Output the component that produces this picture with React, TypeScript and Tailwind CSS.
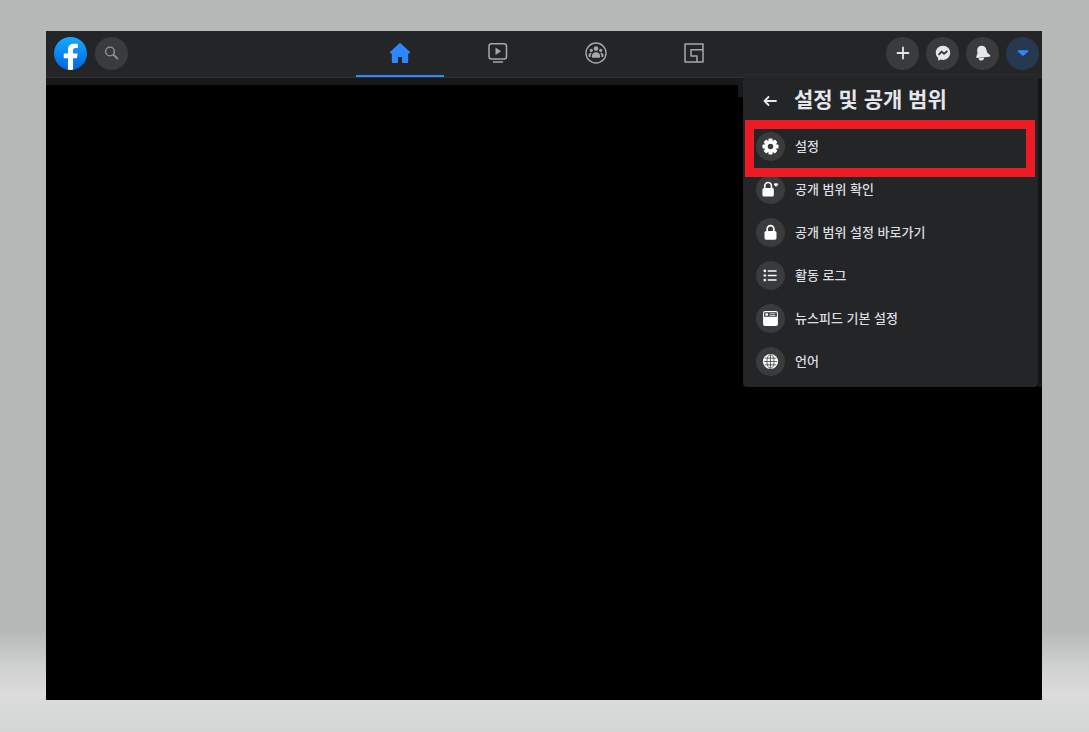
import { useState } from "react";
import type { ReactNode } from "react";

type IconProps = { className?: string };

function FacebookLogo() {
  return (
    <svg className="size-[33px]" viewBox="0 0 24 24">
      <defs>
        <linearGradient id="fb" x1="0" y1="0" x2="0" y2="1">
          <stop offset="0" stopColor="#17a9fd" />
          <stop offset="1" stopColor="#0165e1" />
        </linearGradient>
      </defs>
      <path fill="#fff" d="M6.5 4.5h11.5v11.5h-3.6v7.7q-2.3.5-4.8 0V16H6.5z" />
      <path
        fill="url(#fb)"
        d="M24 12.073c0-6.627-5.373-12-12-12s-12 5.373-12 12c0 5.99 4.388 10.954 10.125 11.854v-8.385H7.078v-3.47h3.047V9.43c0-3.007 1.792-4.669 4.533-4.669 1.312 0 2.686.235 2.686.235v2.953H15.83c-1.491 0-1.956.925-1.956 1.874v2.25h3.328l-.532 3.47h-2.796v8.385C19.612 23.027 24 18.062 24 12.073z"
      />
    </svg>
  );
}

function SearchIcon() {
  return (
    <svg className="size-4" viewBox="0 0 16 16" fill="none" stroke="currentColor">
      <circle cx="6" cy="6.5" r="4.4" strokeWidth="1.4" />
      <path d="M9.700 10l3.800 3.600" strokeWidth="1.9" strokeLinecap="round" />
    </svg>
  );
}

function HomeIcon() {
  return (
    <svg className="size-6" viewBox="0 0 24 24" fill="currentColor">
      <path d="M11.2 2.400a1.200 1.200 0 0 1 1.600 0l9 8.300c.7.7.4 1.700-.6 1.700h-1V21a1 1 0 0 1-1 1H15a1 1 0 0 1-1-1v-5h-4v5a1 1 0 0 1-1 1H4.800a1 1 0 0 1-1-1v-8.600h-1c-1 0-1.300-1-.6-1.700z" />
    </svg>
  );
}

function WatchIcon() {
  return (
    <svg className="size-6" viewBox="0 0 24 24" fill="none" stroke="currentColor" strokeWidth="1.5">
      <rect x="3" y="2.8" width="17.5" height="15.2" rx="2.5" />
      <path d="M9.500 6.500v7.500l5.500-3.750z" fill="currentColor" stroke="none" />
      <path d="M7.500 21h9" strokeLinecap="round" />
    </svg>
  );
}

function GroupsIcon() {
  return (
    <svg className="size-6" viewBox="0 0 24 24" fill="currentColor">
      <circle cx="12" cy="12" r="10" fill="none" stroke="currentColor" strokeWidth="1.4" />
      <circle cx="12" cy="7.6" r="2.3" />
      <circle cx="7.3" cy="9.3" r="1.6" />
      <circle cx="16.7" cy="9.3" r="1.6" />
      <path d="M7.800 15.800c0-3 1.600-4.600 4.200-4.600s4.200 1.600 4.200 4.600c0 .7-.4 1-1 1H8.800c-.6 0-1-.3-1-1z" />
      <path d="M7.300 11.700c-2 0-2.900 1.500-2.900 3.400 0 .5.300.8.700.8h1.400c0-1.700.4-3.100 1.500-4.100zM16.700 11.700c2 0 2.900 1.500 2.900 3.400 0 .5-.3.8-.7.8h-1.400c0-1.700-.4-3.100-1.500-4.100z" />
    </svg>
  );
}

function GamingIcon() {
  return (
    <svg className="size-6" viewBox="0 0 24 24" fill="none" stroke="currentColor" strokeWidth="1.5" strokeLinejoin="round">
      <path d="M3 3h18v18H3z" />
      <path d="M21 8.800H9V15h6v6" />
    </svg>
  );
}

function PlusIcon() {
  return (
    <svg className="size-5" viewBox="0 0 20 20" stroke="currentColor" strokeWidth="1.8" strokeLinecap="round">
      <path d="M10 4.500v11M4.500 10h11" />
    </svg>
  );
}

function MessengerIcon() {
  return (
    <svg className="size-5" viewBox="0 0 20 20">
      <path
        fill="currentColor"
        d="M10 2.800c-4.100 0-7.200 3-7.200 6.900 0 2.100.9 3.900 2.300 5.100v2.300c0 .4.400.6.700.4l1.700-.9c.8.200 1.600.3 2.500.3 4.100 0 7.200-3.100 7.200-7.100S14.100 2.800 10 2.800z"
      />
      <path fill="none" stroke="#3a3b3c" strokeWidth="1.9" strokeLinejoin="round" d="M5.600 11.900l3-3.300 2.500 2.200 3.300-2.700" />
    </svg>
  );
}

function BellIcon() {
  return (
    <svg className="size-5" viewBox="0 0 20 20" fill="currentColor">
      <path d="M8.200 2.700C5.300 3 3.900 5.300 4.200 8l.3 2.600-1.200 2.900c-.3.800.2 1.400 1 1.400l12.100-1.200c.9-.1 1.200-1.100.6-1.700l-2.700-2.300-.8-2.700C12.800 4 11.200 2.500 8.200 2.700z" />
      <path d="M5.500 15.300l5.600-.5c0 1.600-1.100 2.700-2.600 2.800-1.500.1-2.700-.8-3-2.300z" />
    </svg>
  );
}

function CaretIcon() {
  return (
    <svg className="size-5" viewBox="0 0 20 20" fill="currentColor">
      <path d="M5.400 7.300h9.200c.8 0 1.100.8.600 1.300l-4.400 4c-.5.500-1.100.5-1.600 0l-4.400-4c-.5-.5-.2-1.300.6-1.300z" />
    </svg>
  );
}

function BackIcon() {
  return (
    <svg className="size-4" viewBox="0 0 16 16" fill="none" stroke="currentColor" strokeWidth="1.8" strokeLinecap="round" strokeLinejoin="round">
      <path d="M14 9H2.500M6.500 5l-4 4 4 4" />
    </svg>
  );
}

function GearIcon({ className }: IconProps) {
  return (
    <svg className={className} viewBox="0 0 20 20">
      <g fill="currentColor">
        <circle cx="10" cy="10" r="6.4" />
        <rect x="7.8" y="1.6" width="4.4" height="16.8" rx="1" />
        <rect x="7.8" y="1.6" width="4.4" height="16.8" rx="1" transform="rotate(45 10 10)" />
        <rect x="7.8" y="1.6" width="4.4" height="16.8" rx="1" transform="rotate(90 10 10)" />
        <rect x="7.8" y="1.6" width="4.4" height="16.8" rx="1" transform="rotate(135 10 10)" />
      </g>
      <circle cx="10" cy="10" r="2.9" fill="#3a3b3c" />
    </svg>
  );
}

function LockHeartIcon({ className }: IconProps) {
  return (
    <svg className={className} viewBox="0 0 20 20" fill="currentColor">
      <rect x="1.5" y="8.3" width="12" height="9" rx="1.6" />
      <path d="M4 9V6.200a3.500 3.500 0 0 1 7 0V9" fill="none" stroke="currentColor" strokeWidth="1.7" />
      <path d="M15.800 7.200l-2-2c-1-1.200.9-2.700 2-1.400 1.100-1.300 3 .2 2 1.400z" />
    </svg>
  );
}

function LockIcon({ className }: IconProps) {
  return (
    <svg className={className} viewBox="0 0 20 20" fill="currentColor">
      <rect x="3.7" y="8.3" width="12.6" height="9.2" rx="1.7" />
      <path d="M6.500 9V6.200a3.500 3.500 0 0 1 7 0V9" fill="none" stroke="currentColor" strokeWidth="1.8" />
    </svg>
  );
}

function ListIcon({ className }: IconProps) {
  return (
    <svg className={className} viewBox="0 0 20 20" fill="currentColor">
      <circle cx="4" cy="5.2" r="1.4" />
      <circle cx="4" cy="10" r="1.4" />
      <circle cx="4" cy="14.8" r="1.4" />
      <path d="M7.800 5.200h8M7.800 10h8M7.800 14.800h8" stroke="currentColor" strokeWidth="1.6" strokeLinecap="round" />
    </svg>
  );
}

function FeedIcon({ className }: IconProps) {
  return (
    <svg className={className} viewBox="0 0 20 20">
      <rect x="2.2" y="2.2" width="15.6" height="15.6" rx="2" fill="currentColor" />
      <path d="M3.300 4.300a1 1 0 0 1 1-1h11.400a1 1 0 0 1 1 1v3.900H3.300z" fill="#3a3b3c" />
      <rect x="4.5" y="4.5" width="3" height="2.6" rx="1" fill="currentColor" />
      <path d="M9 5h6M9 6.800h6" stroke="currentColor" strokeWidth=".8" />
    </svg>
  );
}

function GlobeIcon({ className }: IconProps) {
  return (
    <svg className={className} viewBox="0 0 20 20">
      <circle cx="10" cy="10" r="8" fill="currentColor" />
      <g fill="none" stroke="#3a3b3c" strokeWidth=".8">
        <path d="M10 3v14M3 10h14M4 6.500h12M4 13.500h12" />
        <ellipse cx="10" cy="10" rx="3.8" ry="7.2" />
      </g>
    </svg>
  );
}

const tabs = [
  { id: "home", label: "홈", icon: <HomeIcon /> },
  { id: "watch", label: "Watch", icon: <WatchIcon /> },
  { id: "groups", label: "그룹", icon: <GroupsIcon /> },
  { id: "gaming", label: "게임", icon: <GamingIcon /> },
];

const menuItems = [
  { label: "설정", Icon: GearIcon, highlighted: true },
  { label: "공개 범위 확인", Icon: LockHeartIcon },
  { label: "공개 범위 설정 바로가기", Icon: LockIcon },
  { label: "활동 로그", Icon: ListIcon },
  { label: "뉴스피드 기본 설정", Icon: FeedIcon },
  { label: "언어", Icon: GlobeIcon },
];

function RoundButton({ label, active, children }: { label: string; active?: boolean; children: ReactNode }) {
  return (
    <button
      type="button"
      aria-label={label}
      className={`flex size-[33px] items-center justify-center rounded-full ${
        active ? "bg-[#263951] text-[#2d88ff]" : "bg-[#3a3b3c] text-[#e4e6eb]"
      }`}
    >
      {children}
    </button>
  );
}

function SettingsMenu() {
  return (
    <div className="absolute top-[43px] right-0 flex">
      <div className="mt-1 h-[19px] w-[5px] bg-[#18191a]" />
      <section className="w-[295px] rounded-sm border-t border-[#2e2f30] bg-[#242526] pb-1">
        <div className="flex h-[50px] items-center gap-4 pl-[19px] text-[#e4e6eb]">
          <button type="button" aria-label="뒤로">
            <BackIcon />
          </button>
          <h2 className="text-[21px] leading-7 font-bold">설정 및 공개 범위</h2>
        </div>
        <ul>
          {menuItems.map(({ label, Icon, highlighted }) => (
            <li key={label} className="relative">
              <a
                href="#"
                className="flex h-[43px] items-center gap-[10px] px-[13px] text-[13px] leading-5 font-medium text-[#dcdee3]"
              >
                <span className="flex size-[29px] items-center justify-center rounded-full bg-[#3a3b3c] text-white">
                  <Icon className="size-[19px]" />
                </span>
                {label}
              </a>
              {highlighted && (
                <div className="pointer-events-none absolute -top-[5px] right-[3px] -bottom-[9px] left-[2px] z-10 border-[9px] border-[#ed1c24]" />
              )}
            </li>
          ))}
        </ul>
      </section>
      <div className="mt-1 w-1 bg-[#141516]" />
    </div>
  );
}

export default function App() {
  const [activeTab, setActiveTab] = useState("home");

  return (
    <div className="flex min-h-screen flex-col bg-[linear-gradient(to_bottom,#b5b8b7_0%,#b6b8b7_86%,#cfd0d0_91%,#dcdcdc_95%,#d4d6d6_100%)] pt-[31px] pr-[47px] pb-8 pl-[46px] font-['Liberation_Sans','Noto_Sans_CJK_KR',sans-serif]">
      <div className="relative flex flex-1 flex-col bg-black">
        <header className="grid h-[47px] grid-cols-[1fr_auto_1fr] border-b border-[#303132] bg-[#242526] pr-[3px] pl-2">
          <div className="flex h-11 items-center gap-2">
            <a href="#" aria-label="Facebook">
              <FacebookLogo />
            </a>
            <button
              type="button"
              aria-label="검색"
              className="flex size-[33px] items-center justify-center rounded-full bg-[#3a3b3c] text-[#929497]"
            >
              <SearchIcon />
            </button>
          </div>
          <nav className="flex gap-[10px]">
            {tabs.map((tab) => (
              <button
                key={tab.id}
                type="button"
                aria-label={tab.label}
                onClick={() => setActiveTab(tab.id)}
                className={`flex w-[88px] flex-col ${activeTab === tab.id ? "text-[#2d88ff]" : "text-[#a5a8ac]"}`}
              >
                <span className="flex w-full flex-1 items-center justify-center">{tab.icon}</span>
                <span className={`h-[2px] w-full ${activeTab === tab.id ? "bg-[#2d88ff]" : ""}`} />
              </button>
            ))}
          </nav>
          <div className="flex h-11 items-center justify-end gap-[7px]">
            <RoundButton label="만들기">
              <PlusIcon />
            </RoundButton>
            <RoundButton label="Messenger">
              <MessengerIcon />
            </RoundButton>
            <RoundButton label="알림">
              <BellIcon />
            </RoundButton>
            <RoundButton label="계정" active>
              <CaretIcon />
            </RoundButton>
          </div>
        </header>
        <div className="h-[7px] bg-[#18191a]" />
        <SettingsMenu />
      </div>
    </div>
  );
}
